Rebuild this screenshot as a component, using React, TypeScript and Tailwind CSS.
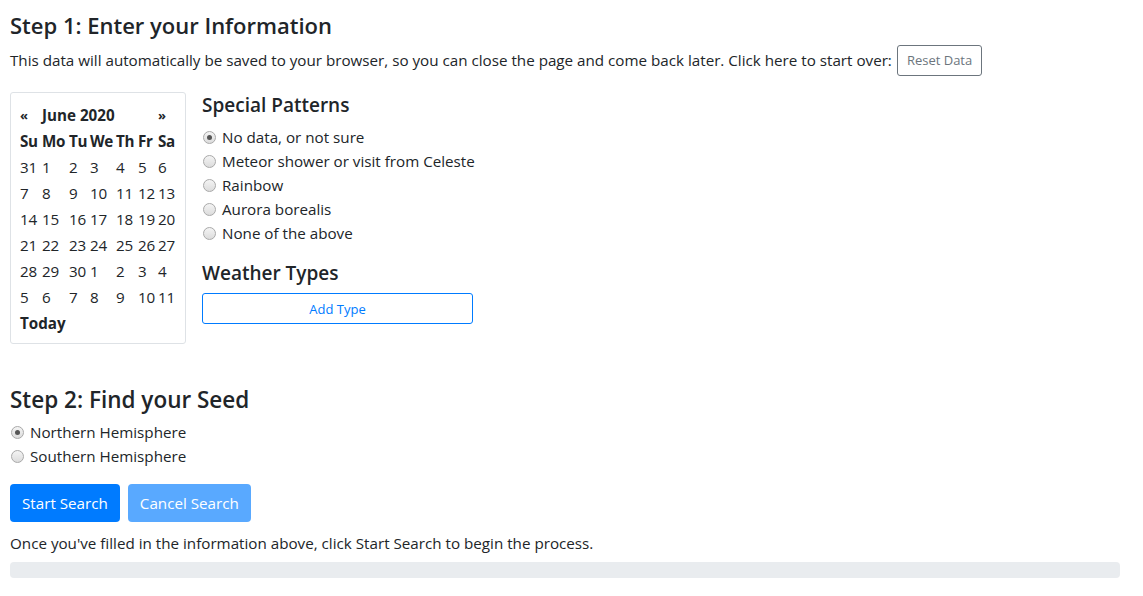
import React from "react";

const font = { fontFamily: '"Open Sans", "Noto Sans", sans-serif' };

function Radio({ checked, label }: { checked?: boolean; label: string }) {
  return (
    <label className="flex items-center h-6">
      <span className="w-[13px] h-[13px] rounded-full border border-[#a9a9a9] bg-gradient-to-b from-[#f4f4f4] to-[#dcdcdc] flex items-center justify-center ml-px mr-[6px]">
        {checked && <span className="w-[5px] h-[5px] rounded-full bg-[#555]" />}
      </span>
      <span>{label}</span>
    </label>
  );
}

const weeks = [
  ["31", "1", "2", "3", "4", "5", "6"],
  ["7", "8", "9", "10", "11", "12", "13"],
  ["14", "15", "16", "17", "18", "19", "20"],
  ["21", "22", "23", "24", "25", "26", "27"],
  ["28", "29", "30", "1", "2", "3", "4"],
  ["5", "6", "7", "8", "9", "10", "11"],
];

function Calendar() {
  return (
    <div className="mt-1 w-[176px] h-[252px] border border-[#dee2e6] rounded-[3px] pl-[9px] pt-[9px]">
      <div className="grid grid-cols-[22px_27px_21px_26px_22px_20px_18px] auto-rows-[26px] items-center">
        <div className="text-[13px] font-bold">«</div>
        <div className="col-span-5 font-bold">June 2020</div>
        <div className="text-[13px] font-bold">»</div>
        {["Su", "Mo", "Tu", "We", "Th", "Fr", "Sa"].map((d) => (
          <div key={d} className="font-bold tracking-[-0.4px]">{d}</div>
        ))}
        {weeks.flat().map((d, i) => (
          <div key={i} className="tracking-[-0.3px]">{d}</div>
        ))}
        <div className="col-span-7 font-bold">Today</div>
      </div>
    </div>
  );
}

export default function App() {
  return (
    <div style={font} className="text-[#212529] text-[15.2px] leading-6 px-[10px] pt-[11px] bg-white min-h-[596px]">
      <h4 className="text-[22px] leading-[29px] font-semibold mb-2">Step 1: Enter your Information</h4>
      <p className="mb-4 flex items-center h-6">
        This data will automatically be saved to your browser, so you can close the page and come back later. Click here to start over:
        <button className="ml-[5px] shrink-0 px-[9px] h-[31px] text-[13px] text-[#6c757d] border border-[#6c757d] rounded-[3px]">Reset Data</button>
      </p>
      <div className="flex">
        <Calendar />
        <div className="ml-4 pt-[5px]">
          <h5 className="text-[19px] leading-6 font-semibold mb-2">Special Patterns</h5>
          <div className="mb-4">
            <Radio checked label="No data, or not sure" />
            <Radio label="Meteor shower or visit from Celeste" />
            <Radio label="Rainbow" />
            <Radio label="Aurora borealis" />
            <Radio label="None of the above" />
          </div>
          <h5 className="text-[19px] leading-6 font-semibold mb-2">Weather Types</h5>
          <button className="w-[271px] h-[31px] text-[13px] text-[#007bff] border border-[#007bff] rounded-[3px]">Add Type</button>
        </div>
      </div>
      <h4 className="text-[22.5px] leading-[29px] font-semibold mt-[41px] mb-[6px]">Step 2: Find your Seed</h4>
      <div className="mb-4">
        <Radio checked label="Northern Hemisphere" />
        <Radio label="Southern Hemisphere" />
      </div>
      <div className="flex gap-2">
        <button className="h-[38px] px-3 bg-[#007bff] text-white rounded-[4px]">Start Search</button>
        <button className="h-[38px] px-3 bg-[#59a9ff] text-white rounded-[4px]">Cancel Search</button>
      </div>
      <p className="mt-[9px]">Once you've filled in the information above, click Start Search to begin the process.</p>
      <div className="mt-[7px] h-4 w-[1110px] bg-[#e9ecef] rounded-[4px]" />
    </div>
  );
}
